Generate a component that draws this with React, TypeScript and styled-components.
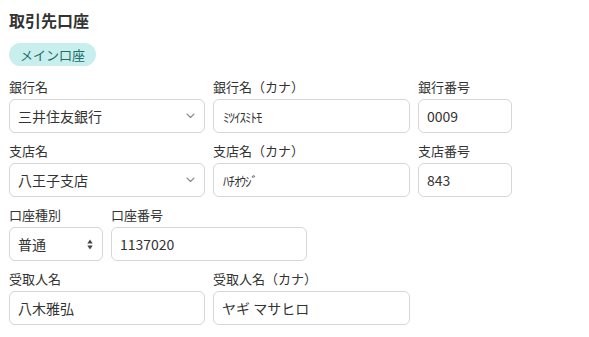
import React from "react";
import styled, { createGlobalStyle } from "styled-components";

const Global = createGlobalStyle`
  html, body { margin: 0; padding: 0; background: #ffffff; }
  body {
    font-family: "Noto Sans CJK JP", "Noto Sans", sans-serif;
    color: #333333;
    -webkit-font-smoothing: antialiased;
  }
  * { box-sizing: border-box; }
`;

const Page = styled.div`
  padding: 8px 9px 12px 9px;
  display: flex;
  flex-direction: column;
  align-items: flex-start;
`;

const Title = styled.h2`
  margin: 0 0 11px 0;
  font-size: 16px;
  line-height: 24px;
  font-weight: 700;
  color: #333333;
`;

const Badge = styled.span`
  display: inline-flex;
  align-items: center;
  height: 23px;
  padding: 0 11px;
  border-radius: 12px;
  background: #c8efed;
  color: #1d6d68;
  font-size: 13px;
  margin-bottom: 11px;
`;

const Rows = styled.div`
  display: flex;
  flex-direction: column;
  gap: 8px;
`;

const Row = styled.div`
  display: flex;
  gap: 8px;
`;

const Field = styled.div<{ $w: number }>`
  display: flex;
  flex-direction: column;
  width: ${(p) => p.$w}px;
`;

const Label = styled.label`
  font-size: 13px;
  line-height: 20px;
  color: #333333;
  margin-bottom: 2px;
  white-space: nowrap;
`;

const boxBase = `
  height: 34px;
  border: 1px solid #d6d6d6;
  border-radius: 6px;
  background: #ffffff;
  font-family: "Noto Sans CJK JP", "Noto Sans", sans-serif;
  font-size: 14px;
  color: #333333;
  padding: 0 8px;
`;

const Input = styled.input`
  ${boxBase}
  width: 100%;
  outline: none;
`;

const KanaInput = styled(Input)`
  font-size: 13px;
  letter-spacing: -1px;
  padding-left: 9px;
`;

const SelectBox = styled.div`
  ${boxBase}
  display: flex;
  align-items: center;
  justify-content: space-between;
  padding-right: 9px;
`;

const Chevron = () => (
  <svg width="9" height="6" viewBox="0 0 9 6" fill="none">
    <path d="M1 1l3.5 3.5L8 1" stroke="#8a8a8a" strokeWidth="1.1" strokeLinecap="round" strokeLinejoin="round" />
  </svg>
);

const Stepper = () => (
  <svg width="6" height="11" viewBox="0 0 6 11">
    <path d="M3 0.5L5.7 4.5H0.3Z" fill="#444" />
    <path d="M3 10.5L5.7 6.5H0.3Z" fill="#444" />
  </svg>
);

export default function App() {
  return (
    <>
      <Global />
      <Page>
        <Title>取引先口座</Title>
        <Badge>メイン口座</Badge>
        <Rows>
          <Row>
            <Field $w={196}>
              <Label>銀行名</Label>
              <SelectBox>
                <span>三井住友銀行</span>
                <Chevron />
              </SelectBox>
            </Field>
            <Field $w={197}>
              <Label>銀行名（カナ）</Label>
              <KanaInput defaultValue="ﾐﾂｲｽﾐﾄﾓ" />
            </Field>
            <Field $w={94}>
              <Label>銀行番号</Label>
              <Input defaultValue="0009" />
            </Field>
          </Row>
          <Row>
            <Field $w={196}>
              <Label>支店名</Label>
              <SelectBox>
                <span>八王子支店</span>
                <Chevron />
              </SelectBox>
            </Field>
            <Field $w={197}>
              <Label>支店名（カナ）</Label>
              <KanaInput defaultValue="ﾊﾁｵｳｼﾞ" />
            </Field>
            <Field $w={94}>
              <Label>支店番号</Label>
              <Input defaultValue="843" />
            </Field>
          </Row>
          <Row>
            <Field $w={94}>
              <Label>口座種別</Label>
              <SelectBox>
                <span>普通</span>
                <Stepper />
              </SelectBox>
            </Field>
            <Field $w={196}>
              <Label>口座番号</Label>
              <Input defaultValue="1137020" />
            </Field>
          </Row>
          <Row>
            <Field $w={196}>
              <Label>受取人名</Label>
              <Input defaultValue="八木雅弘" />
            </Field>
            <Field $w={197}>
              <Label>受取人名（カナ）</Label>
              <Input defaultValue="ヤギ マサヒロ" />
            </Field>
          </Row>
        </Rows>
      </Page>
    </>
  );
}
